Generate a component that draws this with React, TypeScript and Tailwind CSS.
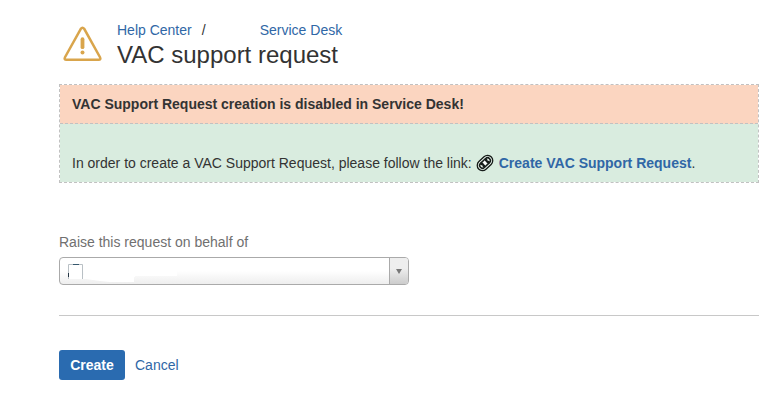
import { type ReactNode } from "react";

export default function App() {
  return (
    <main className="min-h-[420px] bg-white pt-5 pr-2 pl-[59px] font-['Liberation_Sans',Arial,sans-serif] text-sm leading-5 text-[#333]">
      <Header />
      <Notice />

      <form className="mt-[49px]" onSubmit={(e) => e.preventDefault()}>
        <p className="text-[#707070]">Raise this request on behalf of</p>
        <UserSelect />
        <hr className="mt-[30px] border-t border-[#c8c8c8]" />
        <div className="mt-[34px] flex items-center gap-2.5">
          <button
            type="submit"
            className="h-[30px] w-[66px] rounded-[3px] bg-[#2a6bb0] font-bold text-white"
          >
            Create
          </button>
          <TextLink>Cancel</TextLink>
        </div>
      </form>
    </main>
  );
}

function Header() {
  return (
    <header className="flex">
      <WarningIcon />
      <div className="ml-3.5">
        <nav className="flex">
          <TextLink>Help Center</TextLink>
          <span className="ml-2.5 w-[58px]">/</span>
          <TextLink>Service Desk</TextLink>
        </nav>
        <h1 className="text-2xl leading-[30px]">VAC support request</h1>
      </div>
    </header>
  );
}

// Two stacked cells sharing one dashed outline: the alert and what to do next.
function Notice() {
  return (
    <section className="mt-3.5 h-[99px] border border-dashed border-[#c1c1c1]">
      <div className="h-[39px] border-b border-dashed border-[#c1c1c1] bg-[#fbd5c0] px-3 pt-[9px] font-bold">
        VAC Support Request creation is disabled in Service Desk!
      </div>
      <div className="flex h-[58px] bg-[#d9ecdf] px-3 pt-[29px]">
        <span>
          In order to create a VAC Support Request, please follow the link:
        </span>
        <LinkIcon />
        <TextLink bold>Create VAC Support Request</TextLink>
        <span>.</span>
      </div>
    </section>
  );
}

function UserSelect() {
  return (
    <button
      type="button"
      aria-label="Raise this request on behalf of"
      className="mt-[5px] flex h-7 w-[350px] overflow-hidden rounded-[4px] border border-[#aaa] bg-linear-to-t from-[#eee] to-white to-50%"
    >
      <svg width="329" height="26" viewBox="0 0 329 26" aria-hidden="true">
        <path d="M8 6h16v13h51v-1h42v-5h100V0H8z" fill="#fff" />
        <path d="M8 21h18l14 2 10 1h24v-7H8z" fill="#fff" />
        <path d="M8.5 21V6.5h14V21" fill="#fff" stroke="#b9c0c5" />
        <path d="M13 6.5h6" stroke="#36586d" />
        <path d="M8.5 15v4" stroke="#263746" />
      </svg>
      <span className="flex h-full w-[19px] items-center justify-center border-l border-[#aaa] bg-linear-to-t from-[#ccc] to-[#eee] to-60%">
        <svg
          className="mr-px mt-px"
          width="6"
          height="5"
          viewBox="0 0 6 5"
          aria-hidden="true"
        >
          <path d="M0 0h6L3 5z" fill="#777" />
        </svg>
      </span>
    </button>
  );
}

function TextLink({
  children,
  bold = false,
}: {
  children: ReactNode;
  bold?: boolean;
}) {
  return (
    <a
      href="#"
      className={`text-[#3067a6] hover:underline ${bold ? "font-bold" : ""}`}
    >
      {children}
    </a>
  );
}

function WarningIcon() {
  return (
    <svg
      className="mt-1.5 ml-1 shrink-0"
      width="40"
      height="36"
      viewBox="0 0 40 36"
      fill="none"
      stroke="#d9a54c"
      aria-hidden="true"
    >
      <path
        d="M17.8 2.8 2 31.2Q.8 33.8 3.4 33.8h32.2q2.6 0 1.4-2.6L21.2 2.8q-1.7-2.2-3.4 0z"
        strokeWidth="2.5"
      />
      <path d="M19.5 13.2v8" strokeWidth="3.8" strokeLinecap="round" />
      <circle cx="19.5" cy="26.6" r="2" fill="#d9a54c" stroke="none" />
    </svg>
  );
}

// Chain links: nested loops on a diagonal, with a solid knot at each end.
function LinkIcon() {
  return (
    <svg
      className="mt-px mr-[5px] ml-1 shrink-0"
      width="18"
      height="18"
      viewBox="0 0 18 18"
      fill="none"
      stroke="#161c19"
      aria-hidden="true"
    >
      <g transform="rotate(-43 9 9)">
        <rect x=".3" y="3.8" width="17.4" height="10.4" rx="5.2" fill="#e9f3ec" strokeWidth="1.3" />
        <rect x="2.7" y="6.2" width="12.6" height="5.6" rx="2.8" strokeWidth="1.5" />
        <path d="M5.2 6.5q3 2.5 0 5M12.8 6.5q-3 2.5 0 5" strokeWidth="2.4" />
        <circle cx="9" cy="9" r="1.6" fill="#fff" stroke="none" />
      </g>
    </svg>
  );
}
